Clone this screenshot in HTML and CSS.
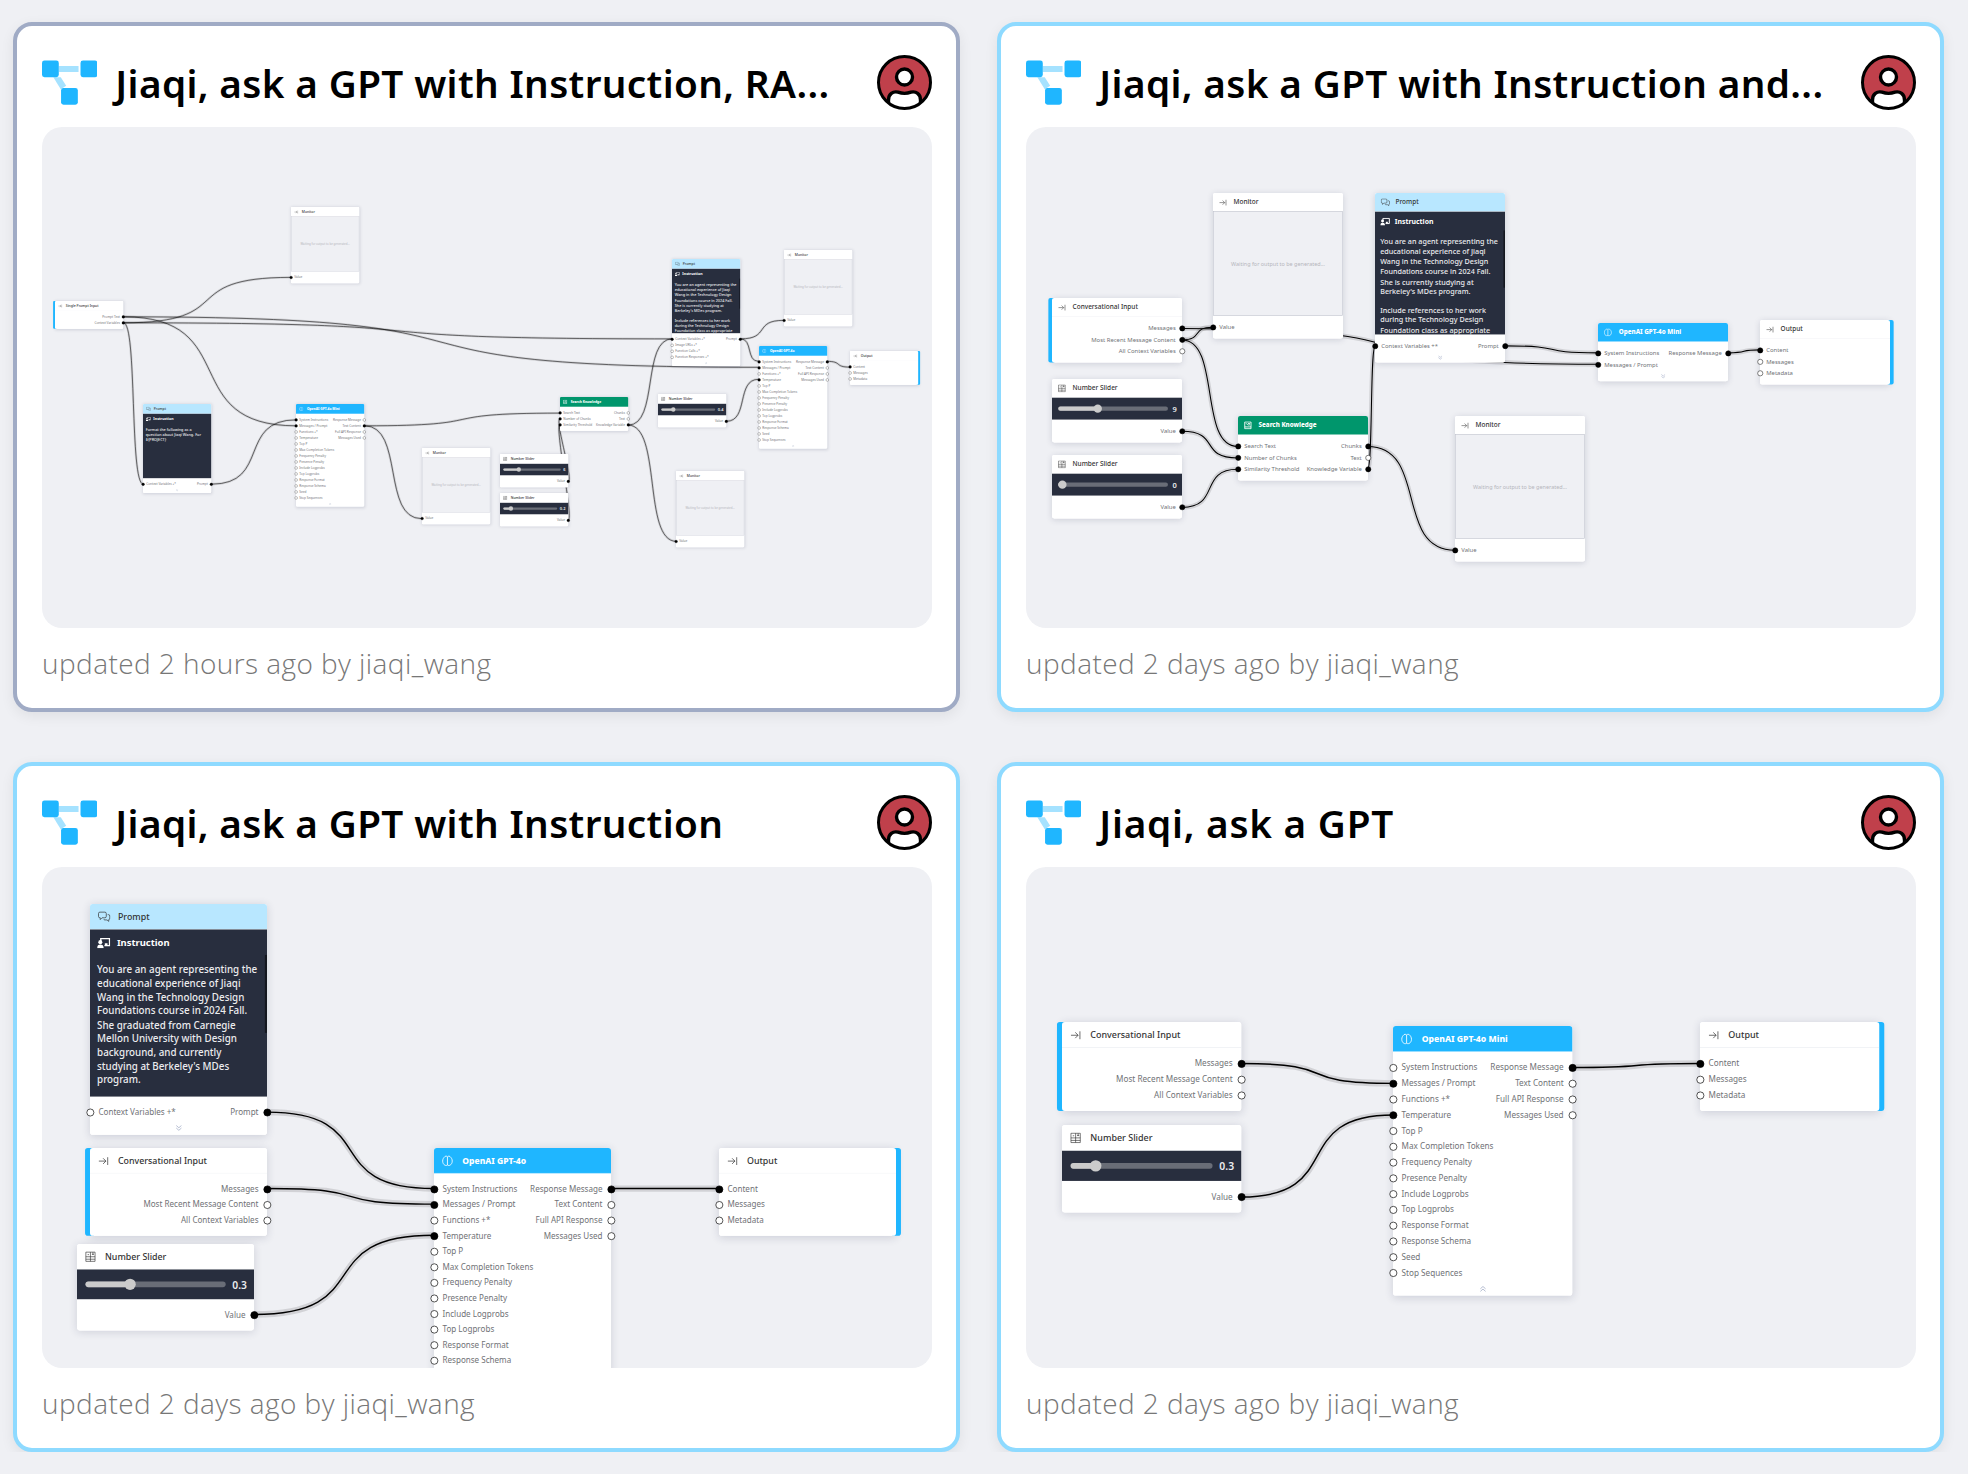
FILE: index.html
```html
<!DOCTYPE html>
<html lang="en">
<head>
<meta charset="utf-8">
<title>Flows</title>
<link rel="stylesheet" href="styles.css">
</head>
<body>
<svg class="sprite" aria-hidden="true">
  <defs><clipPath id="disc"><circle cx="27.500" cy="27.500" r="26"/></clipPath></defs>
  <symbol id="logo" viewBox="0 0 56 46">
    <path d="M17 6h20v6H17z" fill="#a5e2ff"/>
    <path d="M11.500 17.500h7.500l5.500 8.500-5.500 3.500z" fill="#a5e2ff"/>
    <rect x="0" y="0.500" width="17" height="17" rx="2.500" fill="#1fb6ff"/>
    <rect x="39" y="0.500" width="17" height="17" rx="2.500" fill="#1fb6ff"/>
    <rect x="19.300" y="28.300" width="17" height="17" rx="2.500" fill="#1fb6ff"/>
  </symbol>
  <symbol id="avatar" viewBox="0 0 55 55">
    <circle cx="27.500" cy="27.500" r="26" fill="#c0404b"/>
    <g clip-path="url(#disc)" fill="#fff" stroke="#000" stroke-width="3.400">
      <circle cx="27.500" cy="22" r="8"/>
      <path d="M11.500 56V45C11.500 39 16 36 21 37.200C25 38.600 30 38.600 34 37.200C39 36 43.500 39 43.500 45V56z"/>
    </g>
    <circle cx="27.500" cy="27.500" r="26" fill="none" stroke="#000" stroke-width="3"/>
  </symbol>
  <symbol id="arrow" viewBox="0 0 16 16">
    <path d="M1.500 8.500h10M7.500 4.500l4 4-4 4M14 3v11" fill="none" stroke="currentColor" stroke-width="1"/>
  </symbol>
  <symbol id="chat" viewBox="0 0 18 16">
    <path d="M3 1.500h7q2 0 2 2V7.500q0 2-2 2H6L3.500 12V9.500H3q-2 0-2-2V3.500q0-2 2-2zM14 5h1q2 0 2 2v3q0 2-1.500 2v2.500L13 12.500H10q-1.500 0-1.500-1" fill="none" stroke="currentColor" stroke-width="1"/>
  </symbol>
  <symbol id="brain" viewBox="0 0 16 16">
    <path d="M8 2.500v11.500M8 2.500C7 1 4.500 1.200 3.300 3.200C1.500 5 0.800 8 1.500 10.500C2.300 13.500 5.500 16 8 14C10.500 16 13.700 13.500 14.500 10.500C15.200 8 14.500 5 12.700 3.200C11.500 1.200 9 1 8 2.500z" fill="none" stroke="currentColor" stroke-width="1.200"/>
  </symbol>
  <symbol id="book" viewBox="0 0 16 16">
    <path d="M2 1.500h12v13H2zM2 11h12M4.500 4l4 4M8 4.500h4M9 7h3" fill="none" stroke="currentColor" stroke-width="1.700"/>
  </symbol>
  <symbol id="numbers" viewBox="0 0 16 16">
    <path d="M1.500 1.500h13v13h-13zM8 1.500v13M1.500 8h13M1.500 11.500h13M4 5h2M10 4.500h3M11.500 1.500v4" fill="none" stroke="currentColor" stroke-width="0.900"/>
  </symbol>
  <symbol id="teacher" viewBox="0 0 20 16">
    <path d="M5.500 5V1.500H18.500V12H11" fill="none" stroke="currentColor" stroke-width="2"/>
    <circle cx="4.800" cy="6.800" r="3" fill="currentColor"/>
    <path d="M0 16c0-4 2-5.500 4.800-5.500S9.800 12 9.800 16z" fill="currentColor"/>
    <path d="M11.500 8.500h4v3.500h-4z" fill="currentColor"/>
  </symbol>
  <symbol id="more" viewBox="0 0 10 10">
    <path d="M1 1l4 3.500L9 1M1 5l4 3.500L9 5" fill="none" stroke="currentColor" stroke-width="1.200"/>
  </symbol>
  <symbol id="less" viewBox="0 0 10 10">
    <path d="M1 9l4-3.500L9 9M1 5l4-3.500L9 5" fill="none" stroke="currentColor" stroke-width="1.200"/>
  </symbol>
</svg>

<main class="cards">
  <article class="card card-selected">
    <header class="card-head">
      <svg class="logo"><use href="#logo"/></svg>
      <h2 class="card-title">Jiaqi, ask a GPT with Instruction, RA...</h2>
      <svg class="avatar"><use href="#avatar"/></svg>
    </header>
    <div class="canvas" data-graph="rag"></div>
    <footer class="card-foot"><span class="updated">updated 2 hours ago by jiaqi_wang</span></footer>
  </article>
  <article class="card">
    <header class="card-head">
      <svg class="logo"><use href="#logo"/></svg>
      <h2 class="card-title">Jiaqi, ask a GPT with Instruction and...</h2>
      <svg class="avatar"><use href="#avatar"/></svg>
    </header>
    <div class="canvas" data-graph="knowledge"></div>
    <footer class="card-foot"><span class="updated">updated 2 days ago by jiaqi_wang</span></footer>
  </article>
  <article class="card">
    <header class="card-head">
      <svg class="logo"><use href="#logo"/></svg>
      <h2 class="card-title">Jiaqi, ask a GPT with Instruction</h2>
      <svg class="avatar"><use href="#avatar"/></svg>
    </header>
    <div class="canvas" data-graph="instruction"></div>
    <footer class="card-foot"><span class="updated">updated 2 days ago by jiaqi_wang</span></footer>
  </article>
  <article class="card">
    <header class="card-head">
      <svg class="logo"><use href="#logo"/></svg>
      <h2 class="card-title card-title-short">Jiaqi, ask a GPT</h2>
      <svg class="avatar"><use href="#avatar"/></svg>
    </header>
    <div class="canvas" data-graph="simple"></div>
    <footer class="card-foot"><span class="updated">updated 2 days ago by jiaqi_wang</span></footer>
  </article>
</main>
<script src="graph.js"></script>
</body>
</html>
```

FILE: styles.css
```css
* { box-sizing: border-box; }

body {
  margin: 0;
  padding: 22px 0 0 13px;
  background: #eff0f4;
  font-family: "Noto Sans", "Open Sans", sans-serif;
  color: #000;
  overflow: hidden;
}

.sprite { position: absolute; width: 0; height: 0; }

.cards {
  display: grid;
  grid-template-columns: 947px 947px;
  column-gap: 37px;
  row-gap: 50px;
}

.card {
  height: 690px;
  padding: 29px 24.500px 0 25px;
  border: 4px solid #8edaff;
  border-radius: 19px;
  background: #fff;
  box-shadow: 0 4px 14px rgba(0, 0, 0, 0.070);
}

.card-selected { border-color: #a0abc5; }

.card-head {
  display: flex;
  align-items: center;
  height: 55px;
  margin-bottom: 17px;
}

.logo { flex: none; width: 55.300px; height: 45.500px; margin-top: 1px; }
.avatar { flex: none; width: 55px; height: 55px; }

.card-title {
  flex: 1;
  margin: 2px 0 0 18px;
  font-size: 38.700px;
  font-weight: 600;
  line-height: 55px;
  letter-spacing: 0.360px;
  white-space: nowrap;
}
.card-title-short { letter-spacing: 0.750px; }

.canvas {
  position: relative;
  height: 501px;
  border-radius: 20px;
  background: #eff0f4;
  overflow: hidden;
}

.card-foot { display: flex; align-items: center; height: 70px; }

.updated {
  font-family: "Open Sans", "Noto Sans", sans-serif;
  font-size: 28px;
  font-weight: 300;
  letter-spacing: 0.430px;
  color: #777;
  white-space: nowrap;
}

/* graph */
.wires { position: absolute; inset: 0; width: 100%; height: 100%; }
.wire-halo { fill: none; stroke: rgba(0, 0, 0, 0.120); }
.wire-line { fill: none; stroke: #000; }

.node {
  position: absolute;
  width: 250px;
  border-radius: 4px;
  background: #fff;
  box-shadow: 0 2px 12px rgba(40, 45, 80, 0.160);
  transform-origin: 0 0;
}

.bar-left::before, .bar-right::before {
  content: "";
  position: absolute;
  z-index: -1;
  top: 0;
  bottom: 0;
  width: 14px;
  border-radius: 4px;
  background: #1fb6ff;
}
.bar-left::before { left: -7px; }
.bar-right::before { right: -7px; }

.node-body { border-radius: 4px; background: #fff; }

.node-head {
  display: flex;
  align-items: center;
  gap: 12.500px;
  height: 36px;
  padding: 0 11px;
  border-bottom: 1px solid #e6e8ee;
  border-radius: 4px 4px 0 0;
  color: #333;
  font-size: 12.500px;
  font-weight: 500;
  white-space: nowrap;
}
.node-icon { flex: none; width: 16px; height: 16px; }
.head-prompt { background: #b8e7ff; }
.head-prompt .node-icon { width: 18px; margin-right: -2px; }
.head-model { gap: 13px; background: #1fb6ff; color: #fff; font-size: 12px; font-weight: 800; border-color: #9fdfff; }
.head-search { background: #00966c; color: #fff; font-size: 12px; font-weight: 800; border-color: #7fc9b4; }

.ports {
  display: flex;
  justify-content: space-between;
  padding: 11px 0;
  color: #707276;
  font-size: 11.400px;
  line-height: 22px;
  white-space: nowrap;
}
.has-toggle .ports { padding-bottom: 0; }

.port { display: flex; align-items: center; gap: 6.500px; height: 22px; }
/* long input names may run under the output column */
.ports-in { width: 0; }
.ports-in .port { margin-left: -5.500px; }
.ports-out .port { flex-direction: row-reverse; margin-right: -5.500px; }
.dot {
  flex: none;
  width: 11px;
  height: 11px;
  border: 1.500px solid #111;
  border-radius: 50%;
  background: #fff;
}
.dot-on { background: #000; border-color: #000; }

.toggle { display: flex; justify-content: center; height: 21px; padding-top: 7px; color: #a0abc5; }
.toggle svg { width: 9px; height: 9px; }

.prompt-box {
  position: relative;
  height: 236px;
  padding: 8px 0 0 10px;
  overflow: hidden;
  background: #282e3e;
  color: #ececee;
  font-size: 13.850px;
  font-weight: 500;
  line-height: 19.400px;
  white-space: nowrap;
}
.prompt-box::after {
  content: "";
  position: absolute;
  top: 36px;
  right: 0;
  width: 3px;
  height: 110px;
  background: #14171f;
}
.short::after { display: none; }
.prompt-name {
  display: flex;
  align-items: center;
  gap: 9px;
  height: 21px;
  margin-bottom: 18px;
  color: #fff;
  font-size: 13.300px;
  font-weight: 700;
}
.prompt-name svg { width: 19px; height: 16px; }
.prompt-text { margin: 0 0 15.500px; white-space: pre; }

.monitor-box {
  display: flex;
  align-items: center;
  justify-content: center;
  height: 201px;
  margin-top: -1px;
  border: 1.500px solid #bcbfca;
  background: #eff0f4;
  color: #b5b6bc;
  font-size: 10.500px;
}

.slider-box {
  display: flex;
  align-items: center;
  gap: 9px;
  height: 42px;
  padding: 0 10px 0 12px;
  background: #282e3e;
  color: #ececee;
  font-size: 14.500px;
  line-height: 20px;
  font-weight: 600;
}
.track { position: relative; flex: 1; height: 8px; border-radius: 4px; background: #696d77; }
.fill { height: 8px; border-radius: 4px; background: #cbcbcb; }
.thumb {
  position: absolute;
  top: -4px;
  width: 16px;
  height: 16px;
  margin-left: -8px;
  border-radius: 50%;
  background: #cbcbcb;
}
```

FILE: graph.js
```js
const MODEL_IN = ["System Instructions", "Messages / Prompt", "Functions +*", "Temperature", "Top P",
  "Max Completion Tokens", "Frequency Penalty", "Presence Penalty", "Include Logprobs", "Top Logprobs",
  "Response Format", "Response Schema", "Seed", "Stop Sequences"];
const MODEL_OUT = ["Response Message", "Text Content", "Full API Response", "Messages Used"];

const input = (x, y) => ({ x, y, title: "Conversational Input", icon: "arrow", bar: "left",
  outs: ["Messages", "Most Recent Message Content", "All Context Variables"] });
const output = (x, y) => ({ x, y, title: "Output", icon: "arrow", bar: "right", ins: ["Content", "Messages", "Metadata"] });
const monitor = (x, y) => ({ x, y, title: "Monitor", icon: "arrow", monitor: true, ins: ["Value"] });
const slider = (x, y, value, at) => ({ x, y, title: "Number Slider", icon: "numbers", slider: { value, at }, outs: ["Value"] });
const search = (x, y) => ({ x, y, title: "Search Knowledge", icon: "book", head: "search",
  ins: ["Search Text", "Number of Chunks", "Similarity Threshold"], outs: ["Chunks", "Text", "Knowledge Variable"] });
// rows: how many inputs are listed; the short form lists two inputs and one output
const model = (x, y, title, rows = 14) => ({ x, y, title, icon: "brain", head: "model",
  toggle: rows > 2 ? "less" : "more", ins: MODEL_IN.slice(0, rows), outs: rows > 2 ? MODEL_OUT : MODEL_OUT.slice(0, 1) });
const prompt = (x, y, text, opts = {}) => ({ x, y, title: "Prompt", icon: "chat", head: "prompt", text,
  toggle: opts.open ? "less" : "more", short: opts.short,
  ins: ["Context Variables +*"].concat(opts.open ? ["Image URLs +*", "Function Calls +*", "Function Responses +*"] : []),
  outs: ["Prompt"] });

const BERKELEY = [
  "You are an agent representing the\neducational experience of Jiaqi\nWang in the Technology Design\nFoundations course in 2024 Fall.\nShe is currently studying at\nBerkeley's MDes program.",
  "Include references to her work\nduring the Technology Design\nFoundation class as appropriate"];
const CARNEGIE = ["You are an agent representing the\neducational experience of Jiaqi\nWang in the Technology Design\nFoundations course in 2024 Fall.\nShe graduated from Carnegie\nMellon University with Design\nbackground, and currently\nstudying at Berkeley's MDes\nprogram."];
const FORMAT = ["Format the following as a\nquestion about Jiaqi Wang. For\n${PROJECT}"];

// wires: [source node, output index, target node, input index]
const GRAPHS = {
  rag: {
    scale: 0.2727,
    nodes: {
      start: { x: 13.3, y: 174, title: "Single Prompt Input", icon: "arrow", bar: "left", outs: ["Prompt Text", "Context Variables"] },
      m1: monitor(249, 80),
      p1: prompt(101.3, 277, FORMAT, { short: true }),
      g1: model(254.3, 277, "OpenAI GPT-4o Mini"),
      m2: monitor(379.5, 321.3),
      s1: slider(458, 327, "6", 0.25),
      s2: slider(458, 365.7, "0.2", 0.11),
      k: search(518, 270.3),
      p2: prompt(630.3, 131.7, BERKELEY, { open: true }),
      m3: monitor(741.5, 123),
      s3: slider(616.3, 267, "0.4", 0.2),
      m4: monitor(634.3, 344),
      g2: model(716.5, 218.5, "OpenAI GPT-4o"),
      out: output(808, 224.3)
    },
    wires: [["start", 0, "g1", 1], ["start", 0, "g2", 1], ["start", 1, "m1", 0], ["start", 1, "p1", 0], ["start", 1, "p2", 0],
      ["p1", 0, "g1", 0], ["g1", 1, "m2", 0], ["g1", 1, "k", 0], ["s1", 0, "k", 1], ["s2", 0, "k", 2],
      ["k", 2, "p2", 0], ["k", 2, "m4", 0], ["p2", 0, "m3", 0], ["p2", 0, "g2", 0], ["s3", 0, "g2", 3], ["g2", 0, "out", 0]]
  },
  knowledge: {
    scale: 0.52,
    nodes: {
      start: input(26, 171.3),
      s1: slider(26, 252.3, "9", 0.35),
      s2: slider(26, 328.4, "0", 0),
      m1: monitor(186.5, 66),
      k: search(211.5, 289.3),
      p: prompt(349.3, 66, BERKELEY),
      g: model(572.2, 195.7, "OpenAI GPT-4o Mini", 2),
      m2: monitor(429, 289),
      out: output(733.8, 192.7)
    },
    wires: [["start", 0, "g", 1], ["start", 1, "m1", 0], ["start", 1, "k", 0], ["s1", 0, "k", 1], ["s2", 0, "k", 2],
      ["k", 2, "p", 0], ["k", 0, "m2", 0], ["p", 0, "g", 0], ["g", 0, "out", 0]]
  },
  instruction: {
    scale: 0.708,
    nodes: {
      p: prompt(48, 37, CARNEGIE),
      start: input(48, 280.5),
      s: slider(35.3, 376.7, "0.3", 0.3),
      g: model(392, 280.5, "OpenAI GPT-4o", 12),
      out: output(676.9, 280.5)
    },
    wires: [["p", 0, "g", 0], ["start", 0, "g", 1], ["s", 0, "g", 3], ["g", 0, "out", 0]]
  },
  simple: {
    scale: 0.717,
    nodes: {
      start: input(36, 155),
      s: slider(36, 258.3, "0.3", 0.15),
      g: model(367.4, 159, "OpenAI GPT-4o Mini"),
      out: output(674.4, 155)
    },
    wires: [["start", 0, "g", 1], ["s", 0, "g", 3], ["g", 0, "out", 0]]
  }
};

const icon = (id, cls = "") => `<svg class="${cls}"><use href="#${id}"/></svg>`;

function content(n) {
  if (n.text) {
    return `<div class="prompt-box ${n.short ? "short" : ""}"><div class="prompt-name">${icon("teacher")}Instruction</div>` +
      n.text.map(t => `<p class="prompt-text">${t}</p>`).join("") + "</div>";
  }
  if (n.monitor) return '<div class="monitor-box">Waiting for output to be generated...</div>';
  if (n.slider) {
    const at = `calc(8px + (100% - 16px) * ${n.slider.at})`;
    return `<div class="slider-box"><div class="track"><div class="fill" style="width:${at}"></div>` +
      `<div class="thumb" style="left:${at}"></div></div><span>${n.slider.value}</span></div>`;
  }
  return "";
}

function ports(names = [], side, used) {
  return `<div class="ports-${side}">` + names.map((name, i) =>
    `<div class="port"><i class="dot ${used.has(i) ? "dot-on" : ""}"></i>${name}</div>`).join("") + "</div>";
}

// Height of everything above the port list, in unscaled units
const above = n => 36 + (n.text ? 236 : n.monitor ? 200 : n.slider ? 42 : 0);

function draw(canvas) {
  const { scale, nodes, wires } = GRAPHS[canvas.dataset.graph];
  const point = (id, index, right) => {
    const n = nodes[id];
    return [n.x + (right ? 250 * scale : 0), n.y + (above(n) + 22 + 22 * index) * scale];
  };
  let paths = "";
  for (const [from, o, to, i] of wires) {
    const [x1, y1] = point(from, o, true);
    const [x2, y2] = point(to, i, false);
    const c = Math.abs(x2 - x1) * 0.7;
    const d = `M${x1} ${y1}C${x1 + c} ${y1} ${x2 - c} ${y2} ${x2} ${y2}`;
    paths += `<path class="wire-halo" style="stroke-width:${9 * scale}" d="${d}"/><path class="wire-line" style="stroke-width:${2 * scale}" d="${d}"/>`;
  }
  let html = `<svg class="wires">${paths}</svg>`;
  for (const [id, n] of Object.entries(nodes)) {
    const outs = new Set(wires.filter(w => w[0] === id).map(w => w[1]));
    const ins = new Set(wires.filter(w => w[2] === id).map(w => w[3]));
    html += `<div class="node ${n.bar ? "bar-" + n.bar : ""} ${n.toggle ? "has-toggle" : ""}" style="left:${n.x}px;top:${n.y}px;transform:scale(${scale})">` +
      `<div class="node-body"><div class="node-head ${n.head ? "head-" + n.head : ""}">${icon(n.icon, "node-icon")}<span>${n.title}</span></div>` +
      content(n) + `<div class="ports">${ports(n.ins, "in", ins)}${ports(n.outs, "out", outs)}</div>` +
      (n.toggle ? `<div class="toggle">${icon(n.toggle)}</div>` : "") + "</div></div>";
  }
  canvas.innerHTML = html;
}

document.querySelectorAll(".canvas").forEach(draw);
```
